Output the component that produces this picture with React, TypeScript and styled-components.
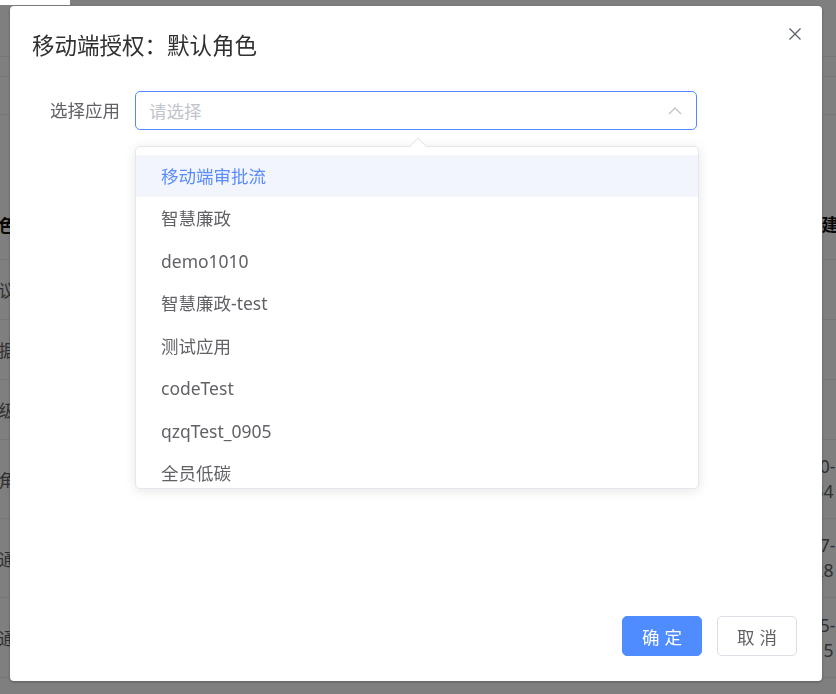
import styled, { createGlobalStyle } from "styled-components";

const GlobalStyle = createGlobalStyle`
  html, body {
    margin: 0;
    padding: 0;
  }
  body {
    width: 836px;
    height: 694px;
    overflow: hidden;
    background: #ffffff;
    font-family: "Noto Sans", "Noto Sans CJK SC", sans-serif;
  }
  * {
    box-sizing: border-box;
  }
`;

type BgRow = {
  height: number;
  left?: string;
  right?: string[];
  head?: boolean;
  indent?: number;
  line?: boolean;
};

const bgRows: BgRow[] = [
  { height: 57, line: true },
  { height: 20, line: true },
  { height: 38, line: true },
  { height: 75 },
  { height: 70, left: "角色", right: ["创建时间"], head: true, indent: 40, line: true },
  { height: 60, left: "会议", line: true },
  { height: 60, left: "数据", line: true },
  { height: 60, left: "一级", line: true },
  { height: 79, left: "主角", right: ["2020-10-12", "10:21:34"], line: true },
  { height: 79, left: "普通", right: ["2021-07-15", "09:41:28"], line: true },
  { height: 80, left: "普通", right: ["2022-05-23", "16:08:15"], line: true },
  { height: 60, left: "普通", line: true },
];

const options = [
  "移动端审批流",
  "智慧廉政",
  "demo1010",
  "智慧廉政-test",
  "测试应用",
  "codeTest",
  "qzqTest_0905",
  "全员低碳",
  "智慧党建",
];

const App = () => {
  return (
    <>
      <GlobalStyle />
      <Page>
        {bgRows.map((row, i) => (
          <TableRow key={i} $height={row.height} $line={!!row.line}>
            {row.left && <LeftCell $head={!!row.head}>{row.left}</LeftCell>}
            {row.right && (
              <RightCell $head={!!row.head} $indent={row.indent || 0}>
                {row.right.map((t) => (
                  <div key={t}>{t}</div>
                ))}
              </RightCell>
            )}
          </TableRow>
        ))}
      </Page>
      <Mask />
      <TopPatch />
      <DialogWrapper>
        <Dialog>
          <Header>
            <Title>移动端授权：默认角色</Title>
            <CloseButton aria-label="close">
              <svg width="12" height="12" viewBox="0 0 12 12">
                <path
                  d="M0.5 0.5 L11.5 11.5 M11.5 0.5 L0.5 11.5"
                  stroke="#5c606b"
                  strokeWidth="1.3"
                  fill="none"
                />
              </svg>
            </CloseButton>
          </Header>
          <Body>
            <FormItem>
              <Label>选择应用</Label>
              <Select>
                <SelectBox>
                  <Placeholder>请选择</Placeholder>
                  <svg width="14" height="9" viewBox="0 0 14 9">
                    <polyline
                      points="1,8 7,2 13,8"
                      stroke="#c0c4cc"
                      strokeWidth="1.3"
                      fill="none"
                    />
                  </svg>
                </SelectBox>
                <Dropdown>
                  <DropArrow />
                  <OptionList>
                    {options.map((o, i) => (
                      <Option key={o} $active={i === 0}>
                        {o}
                      </Option>
                    ))}
                  </OptionList>
                </Dropdown>
              </Select>
            </FormItem>
          </Body>
          <Footer>
            <Button $primary>确定</Button>
            <Button>取消</Button>
          </Footer>
        </Dialog>
      </DialogWrapper>
    </>
  );
};

export default App;

const Page = styled.div`
  display: flex;
  flex-direction: column;
  width: 836px;
  height: 694px;
  overflow: hidden;
`;

const TableRow = styled.div<{ $height: number; $line: boolean }>`
  display: flex;
  align-items: center;
  flex-shrink: 0;
  height: ${(p) => p.$height}px;
  border-bottom: ${(p) => (p.$line ? "1px solid #ebeef5" : "none")};
`;

const LeftCell = styled.div<{ $head: boolean }>`
  width: 16px;
  overflow: hidden;
  white-space: nowrap;
  direction: rtl;
  font-size: 17.5px;
  color: ${(p) => (p.$head ? "#111111" : "#606266")};
  font-weight: ${(p) => (p.$head ? 700 : 400)};
`;

const RightCell = styled.div<{ $head: boolean; $indent: number }>`
  margin-left: auto;
  width: 72px;
  overflow: hidden;
  white-space: nowrap;
  padding-left: ${(p) => p.$indent}px;
  font-size: 17.5px;
  line-height: 25px;
  color: ${(p) => (p.$head ? "#111111" : "#606266")};
  font-weight: ${(p) => (p.$head ? 700 : 400)};
`;

const Mask = styled.div`
  position: fixed;
  inset: 0;
  background: rgba(0, 0, 0, 0.5);
`;

const TopPatch = styled.div`
  position: fixed;
  top: 0;
  left: 0;
  width: 70px;
  height: 5px;
  background: #ffffff;
`;

const DialogWrapper = styled.div`
  position: fixed;
  inset: 0;
  overflow: hidden;
`;

const Dialog = styled.div`
  position: relative;
  display: flex;
  flex-direction: column;
  width: 812px;
  height: 675px;
  margin: 6px 0 0 10px;
  background: #ffffff;
  border-radius: 4px;
  box-shadow: 0 1px 3px rgba(0, 0, 0, 0.3);
`;

const Header = styled.div`
  position: relative;
  padding: 25px 25px 12px 22px;
`;

const Title = styled.span`
  display: block;
  font-size: 22.5px;
  line-height: 30px;
  color: #303133;
`;

const CloseButton = styled.button`
  position: absolute;
  top: 22px;
  right: 21px;
  display: flex;
  padding: 0;
  border: none;
  background: transparent;
  cursor: pointer;
`;

const Body = styled.div`
  padding: 18px 25px 0;
`;

const FormItem = styled.div`
  display: flex;
  align-items: flex-start;
`;

const Label = styled.label`
  width: 100px;
  padding-right: 15px;
  text-align: right;
  font-size: 17.5px;
  line-height: 39px;
  color: #606266;
`;

const Select = styled.div`
  position: relative;
  width: 562px;
`;

const SelectBox = styled.div`
  display: flex;
  align-items: center;
  justify-content: space-between;
  height: 39px;
  padding: 0 14px 0 13px;
  border: 1px solid #4e8cff;
  border-radius: 5px;
  background: #ffffff;
`;

const Placeholder = styled.span`
  font-size: 17.5px;
  color: #c0c4cc;
`;

const Dropdown = styled.div`
  position: absolute;
  top: calc(100% + 16px);
  left: 0;
  width: 564px;
  height: 343px;
  border: 1px solid #e4e7ed;
  border-radius: 5px;
  background: #ffffff;
  box-shadow: 0 2px 12px rgba(0, 0, 0, 0.1);
`;

const DropArrow = styled.div`
  position: absolute;
  top: -7px;
  left: 276px;
  width: 12px;
  height: 12px;
  background: #ffffff;
  border-top: 1px solid #e4e7ed;
  border-left: 1px solid #e4e7ed;
  transform: rotate(45deg);
`;

const OptionList = styled.ul`
  position: relative;
  height: 100%;
  margin: 0;
  padding: 7.5px 0 0;
  list-style: none;
  overflow: hidden;
  border-radius: 5px;
`;

const Option = styled.li<{ $active: boolean }>`
  height: 42.5px;
  padding: 0 25px;
  line-height: 42.5px;
  font-size: 17.5px;
  white-space: nowrap;
  color: ${(p) => (p.$active ? "#5a8cff" : "#606266")};
  background: ${(p) => (p.$active ? "#f2f5fb" : "transparent")};
`;

const Footer = styled.div`
  display: flex;
  justify-content: flex-end;
  gap: 15px;
  margin-top: auto;
  padding: 0 25px 25px;
`;

const Button = styled.button<{ $primary?: boolean }>`
  width: 80px;
  height: 40px;
  padding: 0 0 0 5px;
  border-radius: 5px;
  border: 1px solid ${(p) => (p.$primary ? "#4e8cff" : "#dcdfe6")};
  background: ${(p) => (p.$primary ? "#4e8cff" : "#ffffff")};
  color: ${(p) => (p.$primary ? "#ffffff" : "#606266")};
  font-family: "Noto Sans", "Noto Sans CJK SC", sans-serif;
  font-size: 17.5px;
  letter-spacing: 5px;
  cursor: pointer;
`;
